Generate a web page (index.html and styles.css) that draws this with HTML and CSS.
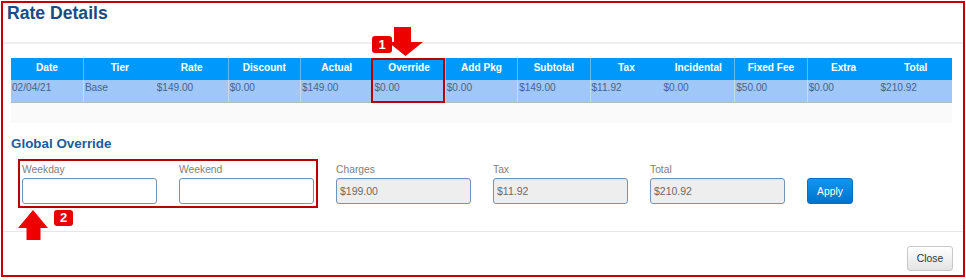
FILE: index.html
```html
<!DOCTYPE html>
<html lang="en">

<head>
    <meta charset="UTF-8">
    <title>Rate Details</title>
    <link rel="stylesheet" href="styles.css">
</head>

<body>
    <div class="frame">
        <div class="modal-head">
            <h2 class="title">Rate Details</h2>
        </div>
        <div class="modal-body">
            <div class="grid-wrap">
                <table class="rates">
                    <tr>
                        <th>Date</th>
                        <th>Tier</th>
                        <th>Rate</th>
                        <th>Discount</th>
                        <th>Actual</th>
                        <th>Override</th>
                        <th>Add Pkg</th>
                        <th>Subtotal</th>
                        <th>Tax</th>
                        <th>Incidental</th>
                        <th>Fixed Fee</th>
                        <th>Extra</th>
                        <th>Total</th>
                    </tr>
                    <tr>
                        <td>02/04/21</td>
                        <td>Base</td>
                        <td>$149.00</td>
                        <td>$0.00</td>
                        <td>$149.00</td>
                        <td>$0.00</td>
                        <td>$0.00</td>
                        <td>$149.00</td>
                        <td>$11.92</td>
                        <td>$0.00</td>
                        <td>$50.00</td>
                        <td>$0.00</td>
                        <td>$210.92</td>
                    </tr>
                </table>
                <!-- callout 1 -->
                <div class="mark mark-col"></div>
                <span class="badge badge-1">1</span>
                <svg class="arrow arrow-down" width="35" height="29" viewBox="0 0 35 29">
                    <polygon points="6,0 23,0 23,15 35,15 17.5,29 0,15 6,15" />
                </svg>
            </div>

            <h3 class="sub">Global Override</h3>

            <div class="fields">
                <div class="field">
                    <label>Weekday</label>
                    <input type="text" class="inp">
                </div>
                <div class="field">
                    <label>Weekend</label>
                    <input type="text" class="inp">
                </div>
                <div class="field">
                    <label>Charges</label>
                    <input type="text" class="inp" value="$199.00" readonly>
                </div>
                <div class="field">
                    <label>Tax</label>
                    <input type="text" class="inp" value="$11.92" readonly>
                </div>
                <div class="field">
                    <label>Total</label>
                    <input type="text" class="inp" value="$210.92" readonly>
                </div>
                <button class="btn btn-apply">Apply</button>

                <!-- callout 2 -->
                <div class="mark mark-fields"></div>
                <svg class="arrow arrow-up" width="30" height="30" viewBox="0 0 30 30">
                    <polygon points="15,0 30,18 22.5,18 22.5,30 8.5,30 8.5,18 0,18" />
                </svg>
                <span class="badge badge-2">2</span>
            </div>
        </div>
        <div class="modal-foot">
            <button class="btn btn-close">Close</button>
        </div>
    </div>
</body>

</html>
```

FILE: styles.css
```css
* {
    padding: 0;
    margin: 0;
    box-sizing: border-box;
}

body {
    font-family: "Liberation Sans", Arial, sans-serif;
    background: #fff;
}

.frame {
    margin: 1px;
    width: 964px;
    height: 276px;
    border: 2px solid #c40000;
    overflow: hidden;
}

.modal-head {
    padding: 0 4px 19px;
    border-bottom: 2px solid #efefef;
}

.title {
    font-size: 17.6px;
    line-height: 20px;
    font-weight: bold;
    color: #174b86;
}

.modal-body {
    padding: 14px 11px 27px 8px;
}

.grid-wrap {
    position: relative;
    width: 941px;
    padding-bottom: 20px;
    background: #fafafa;
}

.rates {
    width: 941px;
    table-layout: fixed;
    border-collapse: collapse;
    font-size: 10.1px;
    line-height: 12px;
}

.rates th {
    height: 22px;
    padding: 4px 0 6px;
    background: #0099fb;
    color: #fff;
    font-weight: bold;
    text-align: center;
    border-left: 1px solid #5cbaf7;
}

.rates td {
    height: 22px;
    padding: 2px 1px 8px;
    background: #9fc7f7;
    color: #44648f;
    text-align: left;
    vertical-align: top;
    border-left: 1px solid #c6daf0;
    border-bottom: 1px solid #b5b9c0;
}

.rates th:nth-child(1),
.rates th:nth-child(3),
.rates th:nth-child(10),
.rates th:nth-child(13),
.rates td:nth-child(1),
.rates td:nth-child(3),
.rates td:nth-child(10),
.rates td:nth-child(13) {
    border-left: none;
}

.sub {
    margin-top: 13px;
    font-size: 13.4px;
    line-height: 16px;
    font-weight: bold;
    color: #1d5a9c;
}

.fields {
    position: relative;
    display: flex;
    align-items: flex-end;
    gap: 22px;
    margin-top: 12px;
    padding-left: 11px;
}

.field {
    display: flex;
    flex-direction: column;
    width: 135px;
}

.field label {
    font-size: 10.3px;
    line-height: 12px;
    color: #808080;
    margin-bottom: 2px;
}

.inp {
    height: 26px;
    width: 135px;
    border: 1px solid #7393bb;
    border-radius: 3px;
    padding: 0 3px;
    font-family: "Liberation Sans", Arial, sans-serif;
    font-size: 10.5px;
    color: #6a6a6a;
    background: #fff;
    box-shadow: inset 0 1px 1px rgba(0, 0, 0, 0.06);
}

.inp[readonly] {
    background: #eeeeee;
}

.btn {
    font-family: "Liberation Sans", Arial, sans-serif;
    font-size: 10.3px;
    border-radius: 3px;
    cursor: pointer;
}

.btn-apply {
    width: 46px;
    height: 26px;
    color: #fff;
    border: 1px solid #0a6fc2;
    background: linear-gradient(#0f97ee, #0073cc);
}

.modal-foot {
    display: flex;
    justify-content: flex-end;
    padding: 14px 10px 0;
    border-top: 1px solid #e6e6e6;
}

.btn-close {
    width: 46px;
    height: 25px;
    color: #333;
    border: 1px solid #c8c8c8;
    background: linear-gradient(#ffffff, #e3e3e3);
}

/* callouts */
.mark {
    position: absolute;
    border: 2px solid #b80000;
}

.mark-col {
    left: 360px;
    top: 0;
    width: 74px;
    height: 45px;
}

.mark-fields {
    left: 7px;
    top: -5px;
    width: 300px;
    height: 49px;
}

.badge {
    position: absolute;
    width: 20px;
    height: 17px;
    border-radius: 3px;
    background: #e60000;
    color: #fff;
    font-size: 13px;
    font-weight: bold;
    line-height: 17px;
    text-align: center;
}

.badge-1 {
    left: 361px;
    top: -22px;
}

.badge-2 {
    left: 43px;
    top: 46px;
    width: 19px;
    height: 16px;
    line-height: 16px;
}

.arrow {
    position: absolute;
    fill: #ee0000;
}

.arrow-down {
    left: 377px;
    top: -31px;
}

.arrow-up {
    left: 7px;
    top: 46px;
}
```
